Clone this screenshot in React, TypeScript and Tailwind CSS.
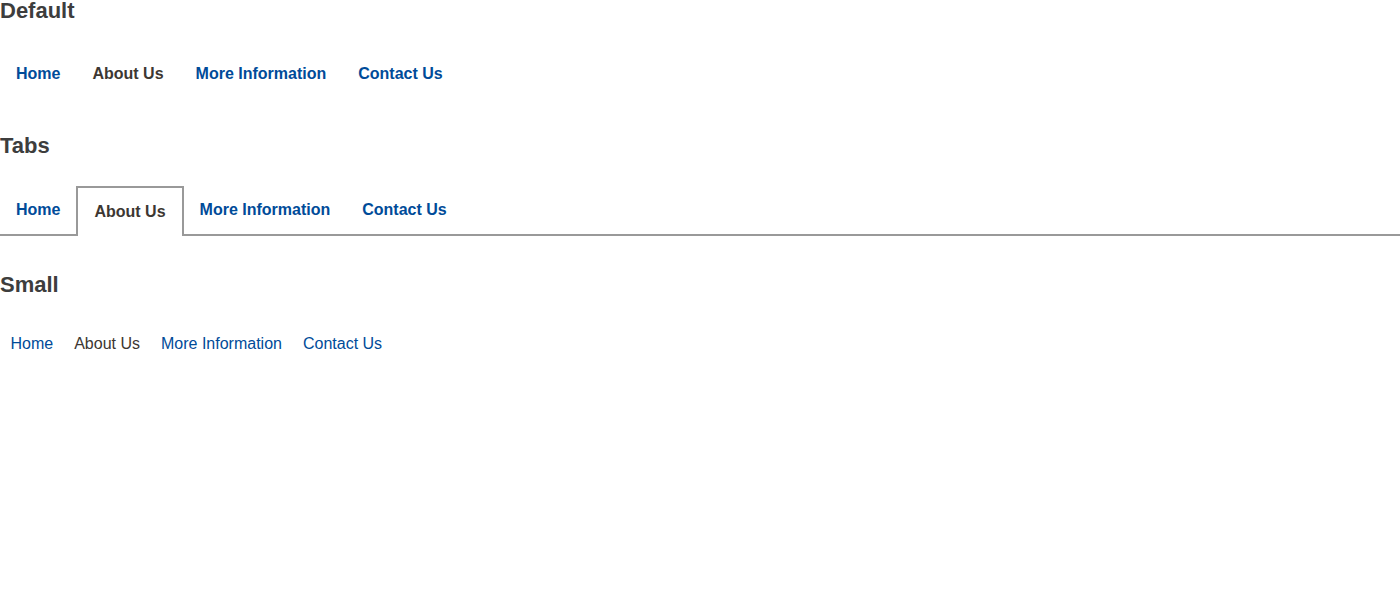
const links = ["Home", "About Us", "More Information", "Contact Us"];
const active = "About Us";

function Heading({ children, className = "" }: { children: React.ReactNode; className?: string }) {
  return (
    <h2 className={`text-[22px] leading-[22px] font-bold text-[#3d3d3d] ${className}`}>{children}</h2>
  );
}

export default function App() {
  return (
    <div className="min-h-screen bg-white font-['Liberation_Sans',Arial,sans-serif]">
      <Heading>Default</Heading>
      <nav className="mt-[40px] flex">
        {links.map((l) => (
          <a
            key={l}
            href="#"
            className={`px-4 text-base leading-6 font-bold ${
              l === active ? "text-[#3d3732]" : "text-[#004b99]"
            }`}
          >
            {l}
          </a>
        ))}
      </nav>

      <Heading className="mt-[49px]">Tabs</Heading>
      <nav className="mt-[29px] flex items-start border-b-2 border-[#999999]">
        {links.map((l) =>
          l === active ? (
            <a
              key={l}
              href="#"
              className="-mb-[2px] border-2 border-b-0 border-[#999999] bg-white px-4 pt-[12px] pb-[12px] text-base leading-6 font-bold text-[#3d3732]"
            >
              {l}
            </a>
          ) : (
            <a
              key={l}
              href="#"
              className="border-2 border-b-0 border-transparent px-[14px] pt-[10px] pb-[12px] text-base leading-6 font-bold text-[#004b99]"
            >
              {l}
            </a>
          )
        )}
      </nav>

      <Heading className="mt-[38px]">Small</Heading>
      <nav className="mt-[36px] flex">
        {links.map((l) => (
          <a
            key={l}
            href="#"
            className={`px-[10.5px] text-base leading-6 ${
              l === active ? "text-[#3d3732]" : "text-[#004b99]"
            }`}
          >
            {l}
          </a>
        ))}
      </nav>
    </div>
  );
}
